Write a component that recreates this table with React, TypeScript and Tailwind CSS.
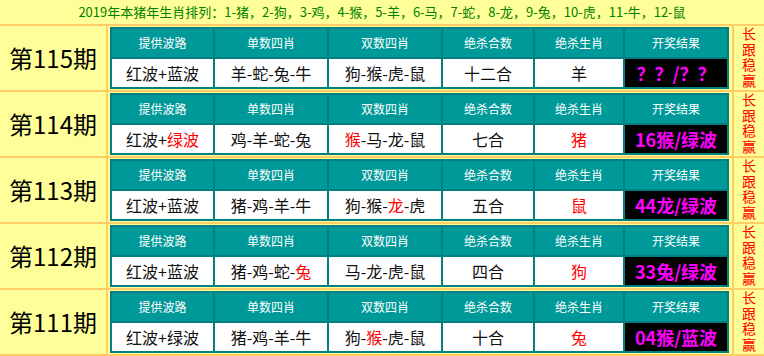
type Part = { t: string; red?: boolean };

type Row = {
  issue: string;
  cells: Part[][];
  result: string;
};

const heads = ['提供波路', '单数四肖', '双数四肖', '绝杀合数', '绝杀生肖', '开奖结果'];

const rows: Row[] = [
  {
    issue: '第115期',
    cells: [
      [{ t: '红波+蓝波' }],
      [{ t: '羊-蛇-兔-牛' }],
      [{ t: '狗-猴-虎-鼠' }],
      [{ t: '十二合' }],
      [{ t: '羊' }],
    ],
    result: '？？/？？',
  },
  {
    issue: '第114期',
    cells: [
      [{ t: '红波+' }, { t: '绿波', red: true }],
      [{ t: '鸡-羊-蛇-兔' }],
      [{ t: '猴', red: true }, { t: '-马-龙-鼠' }],
      [{ t: '七合' }],
      [{ t: '猪', red: true }],
    ],
    result: '16猴/绿波',
  },
  {
    issue: '第113期',
    cells: [
      [{ t: '红波+蓝波' }],
      [{ t: '猪-鸡-羊-牛' }],
      [{ t: '狗-猴-' }, { t: '龙', red: true }, { t: '-虎' }],
      [{ t: '五合' }],
      [{ t: '鼠', red: true }],
    ],
    result: '44龙/绿波',
  },
  {
    issue: '第112期',
    cells: [
      [{ t: '红波+蓝波' }],
      [{ t: '猪-鸡-蛇-' }, { t: '兔', red: true }],
      [{ t: '马-龙-虎-鼠' }],
      [{ t: '四合' }],
      [{ t: '狗', red: true }],
    ],
    result: '33兔/绿波',
  },
  {
    issue: '第111期',
    cells: [
      [{ t: '红波+绿波' }],
      [{ t: '猪-鸡-羊-牛' }],
      [{ t: '狗-' }, { t: '猴', red: true }, { t: '-虎-鼠' }],
      [{ t: '十合' }],
      [{ t: '兔', red: true }],
    ],
    result: '04猴/蓝波',
  },
];

function IssueRow({ row }: { row: Row }) {
  return (
    <div className="flex h-[66px] border-b-2 border-[#FFCC66]">
      <div className="w-[108px] border-r-2 border-[#FFCC66] flex items-center justify-center text-[24px] text-black">
        {row.issue}
      </div>
      <div className="w-[624px] flex items-center pl-[2px]">
        <div className="w-[619px] grid grid-cols-[101px_112px_112px_90px_88px_102px] grid-rows-[28px_28px] gap-[2px] p-[2px] bg-[#008080]">
          {heads.map((h) => (
            <div key={h} className="bg-[#009999] text-white text-[12px] flex items-center justify-center">
              {h}
            </div>
          ))}
          {row.cells.map((parts, i) => (
            <div key={i} className="bg-white text-[16px] text-[#111] flex items-center justify-center whitespace-nowrap">
              {parts.map((p, j) => (
                <span key={j} className={p.red ? 'text-[#FF0000]' : ''}>
                  {p.t}
                </span>
              ))}
            </div>
          ))}
          <div className="bg-black text-[#FF00FF] text-[18px] font-bold flex items-center justify-center whitespace-nowrap">
            {row.result}
          </div>
        </div>
      </div>
      <div className="w-[32px] border-l-2 border-[#FFCC66] flex justify-center pt-[1px]">
        <span className="[writing-mode:vertical-rl] whitespace-nowrap text-[14px] leading-[20px] tracking-[1.5px] text-[#FF0000]">
          长跟稳赢
        </span>
      </div>
    </div>
  );
}

export default function App() {
  return (
    <div
      className="w-[764px] bg-[#FFFF99]"
      style={{ fontFamily: '"Noto Sans CJK SC", "Noto Sans", sans-serif' }}
    >
      <div className="h-[26px] border-b-2 border-[#FFCC66] flex items-center justify-center text-[13px] text-[#008000] whitespace-nowrap">
        2019年本猪年生肖排列：1-猪，2-狗，3-鸡，4-猴，5-羊，6-马，7-蛇，8-龙，9-兔，10-虎，11-牛，12-鼠
      </div>
      {rows.map((r) => (
        <IssueRow key={r.issue} row={r} />
      ))}
    </div>
  );
}
